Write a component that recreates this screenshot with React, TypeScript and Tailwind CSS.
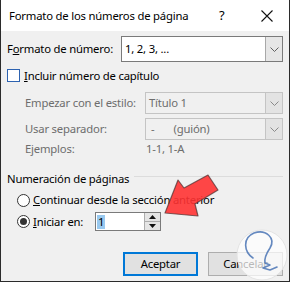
import React from "react";

const font = { fontFamily: '"Noto Sans", "Open Sans", sans-serif' };

function Chevron({ color = "#606060" }: { color?: string }) {
  return (
    <svg width="9" height="5" viewBox="0 0 9 5">
      <path d="M0.5 0.5 L4.5 4.5 L8.5 0.5" fill="none" stroke={color} strokeWidth="1" />
    </svg>
  );
}

function Combo({ children, disabled, className }: { children: React.ReactNode; disabled?: boolean; className: string }) {
  return (
    <div
      className={`flex border ${
        disabled ? "border-[#c4c4c4] bg-[#f0f0f0] text-[#6d6d6d]" : "border-[#7a7a7a] bg-white text-black"
      } ${className}`}
    >
      <div className="flex flex-1 items-center whitespace-nowrap pl-[3px]">{children}</div>
      <div
        className={`flex w-[17px] items-center justify-center border-l ${
          disabled ? "border-[#c4c4c4] bg-[#e3e3e3]" : "border-[#a8a8a8] bg-[#e6e6e6]"
        }`}
      >
        <Chevron color={disabled ? "#8a8a8a" : "#606060"} />
      </div>
    </div>
  );
}

function Radio({ checked }: { checked?: boolean }) {
  return (
    <div className="flex h-[13px] w-[13px] shrink-0 items-center justify-center rounded-full border border-[#333333] bg-white">
      {checked && <div className="h-[7px] w-[7px] rounded-full bg-[#333333]" />}
    </div>
  );
}

export default function App() {
  return (
    <div
      className="relative h-[282px] w-[290px] overflow-hidden whitespace-nowrap text-[11.3px] leading-none tracking-[-0.2px]"
      style={font}
    >
      <div className="flex h-full flex-col border-x border-b border-[#2b2b2b]">
        {/* title bar */}
        <div className="flex h-[31px] items-center bg-white pl-[8px] text-black">
          <span className="flex-1">Formato de los números de página</span>
          <span className="w-[42px] text-[13px]">?</span>
          <svg width="12" height="12" viewBox="0 0 12 12" className="mr-[16px]">
            <path d="M0.5 0.5 L11.5 11.5 M11.5 0.5 L0.5 11.5" stroke="#111" strokeWidth="1.1" />
          </svg>
        </div>

        {/* body */}
        <div className="flex flex-1 flex-col bg-[#f0f0f0] pl-[6px] pr-[6px] text-black">
          <div className="mt-[5px] flex h-[26px] items-center">
            <span className="w-[114px] shrink-0">
              F<span className="underline">o</span>rmato de número:
            </span>
            <Combo className="h-[26px] flex-1">1, 2, 3, ...</Combo>
          </div>

          <div className="mt-[7px] flex h-[13px] items-center">
            <div className="h-[13px] w-[13px] shrink-0 border border-[#2d62b0] bg-white" />
            <span className="ml-[4px]">
              <span className="underline">I</span>ncluir número de capítulo
            </span>
          </div>

          <div className="mt-[10px] flex h-[22px] items-center pl-[18px] text-[#6d6d6d]">
            <span className="w-[120px] shrink-0">Empezar con el estilo:</span>
            <Combo disabled className="h-[22px] flex-1">
              Título 1
            </Combo>
          </div>

          <div className="mt-[4px] flex h-[22px] items-center pl-[18px] text-[#6d6d6d]">
            <span className="w-[120px] shrink-0">Usar separador:</span>
            <Combo disabled className="h-[22px] flex-1">
              <span className="pl-[2px]">-</span>
              <span className="ml-[19px]">(guión)</span>
            </Combo>
          </div>

          <div className="mt-[1px] flex h-[16px] items-center pl-[18px] text-[#6d6d6d]">
            <span className="w-[121px] shrink-0">Ejemplos:</span>
            <span>1-1, 1-A</span>
          </div>

          <div className="mt-[14px] flex h-[16px] items-center">
            <span>Numeración de páginas</span>
            <div className="ml-[5px] mt-[-5px] h-px flex-1 bg-[#dcdcdc]" />
          </div>

          <div className="mt-[5px] flex h-[16px] items-center pl-[10px]">
            <Radio />
            <span className="ml-[3px]">
              <span className="underline">C</span>ontinuar desde la sección anterior
            </span>
          </div>

          <div className="mt-[4px] flex h-[19px] items-center pl-[10px]">
            <Radio checked />
            <span className="ml-[3px] w-[62px] shrink-0">
              <span className="underline">I</span>niciar en:
            </span>
            <div className="flex h-[19px] w-[66px] border border-[#7a7a7a] bg-white">
              <div className="flex flex-1 items-center pl-[1px]">
                <span className="flex h-[14px] items-center bg-[#99c9ef] px-[1px]">1</span>
              </div>
              <div className="flex w-[16px] flex-col border-l border-[#adadad] bg-[#e5e5e5]">
                <div className="flex flex-1 items-center justify-center border-b border-[#adadad]">
                  <svg width="7" height="4" viewBox="0 0 7 4">
                    <path d="M0 4 L3.5 0 L7 4 Z" fill="#111" />
                  </svg>
                </div>
                <div className="flex flex-1 items-center justify-center">
                  <svg width="7" height="4" viewBox="0 0 7 4">
                    <path d="M0 0 L3.5 4 L7 0 Z" fill="#111" />
                  </svg>
                </div>
              </div>
            </div>
          </div>

          <div className="mt-[21px] flex h-[24px] justify-end gap-[10px]">
            <button className="h-[24px] w-[75px] border-2 border-[#0078d7] bg-[#e1e1e1] text-black">
              Aceptar
            </button>
            <button className="h-[24px] w-[75px] border border-[#adadad] bg-[#e1e1e1] text-black">
              Cancelar
            </button>
          </div>
        </div>
      </div>

      {/* red arrow overlay */}
      <svg className="pointer-events-none absolute left-0 top-0" width="290" height="282" viewBox="0 0 290 282">
        <polygon
          points="165,213 178,180 184,188 208,175 218,190 195,204 198,216"
          fill="#ff3333"
          fillOpacity="0.9"
          stroke="#4a3030"
          strokeOpacity="0.7"
          strokeWidth="1.2"
          strokeLinejoin="round"
        />
        {/* watermark */}
        <circle cx="262" cy="255" r="25" fill="#ffffff" fillOpacity="0.72" stroke="#e4e4e4" strokeWidth="1" />
        <path
          d="M253 258 C 244 252, 242 238, 254 233 C 266 229, 276 238, 270 248 C 266 254, 264 258, 265 263 L 270 265 L 263 268 L 270 270 L 277 267"
          fill="none"
          stroke="#4a74b5"
          strokeOpacity="0.85"
          strokeWidth="1.6"
          strokeLinecap="round"
          strokeLinejoin="round"
        />
      </svg>
    </div>
  );
}
